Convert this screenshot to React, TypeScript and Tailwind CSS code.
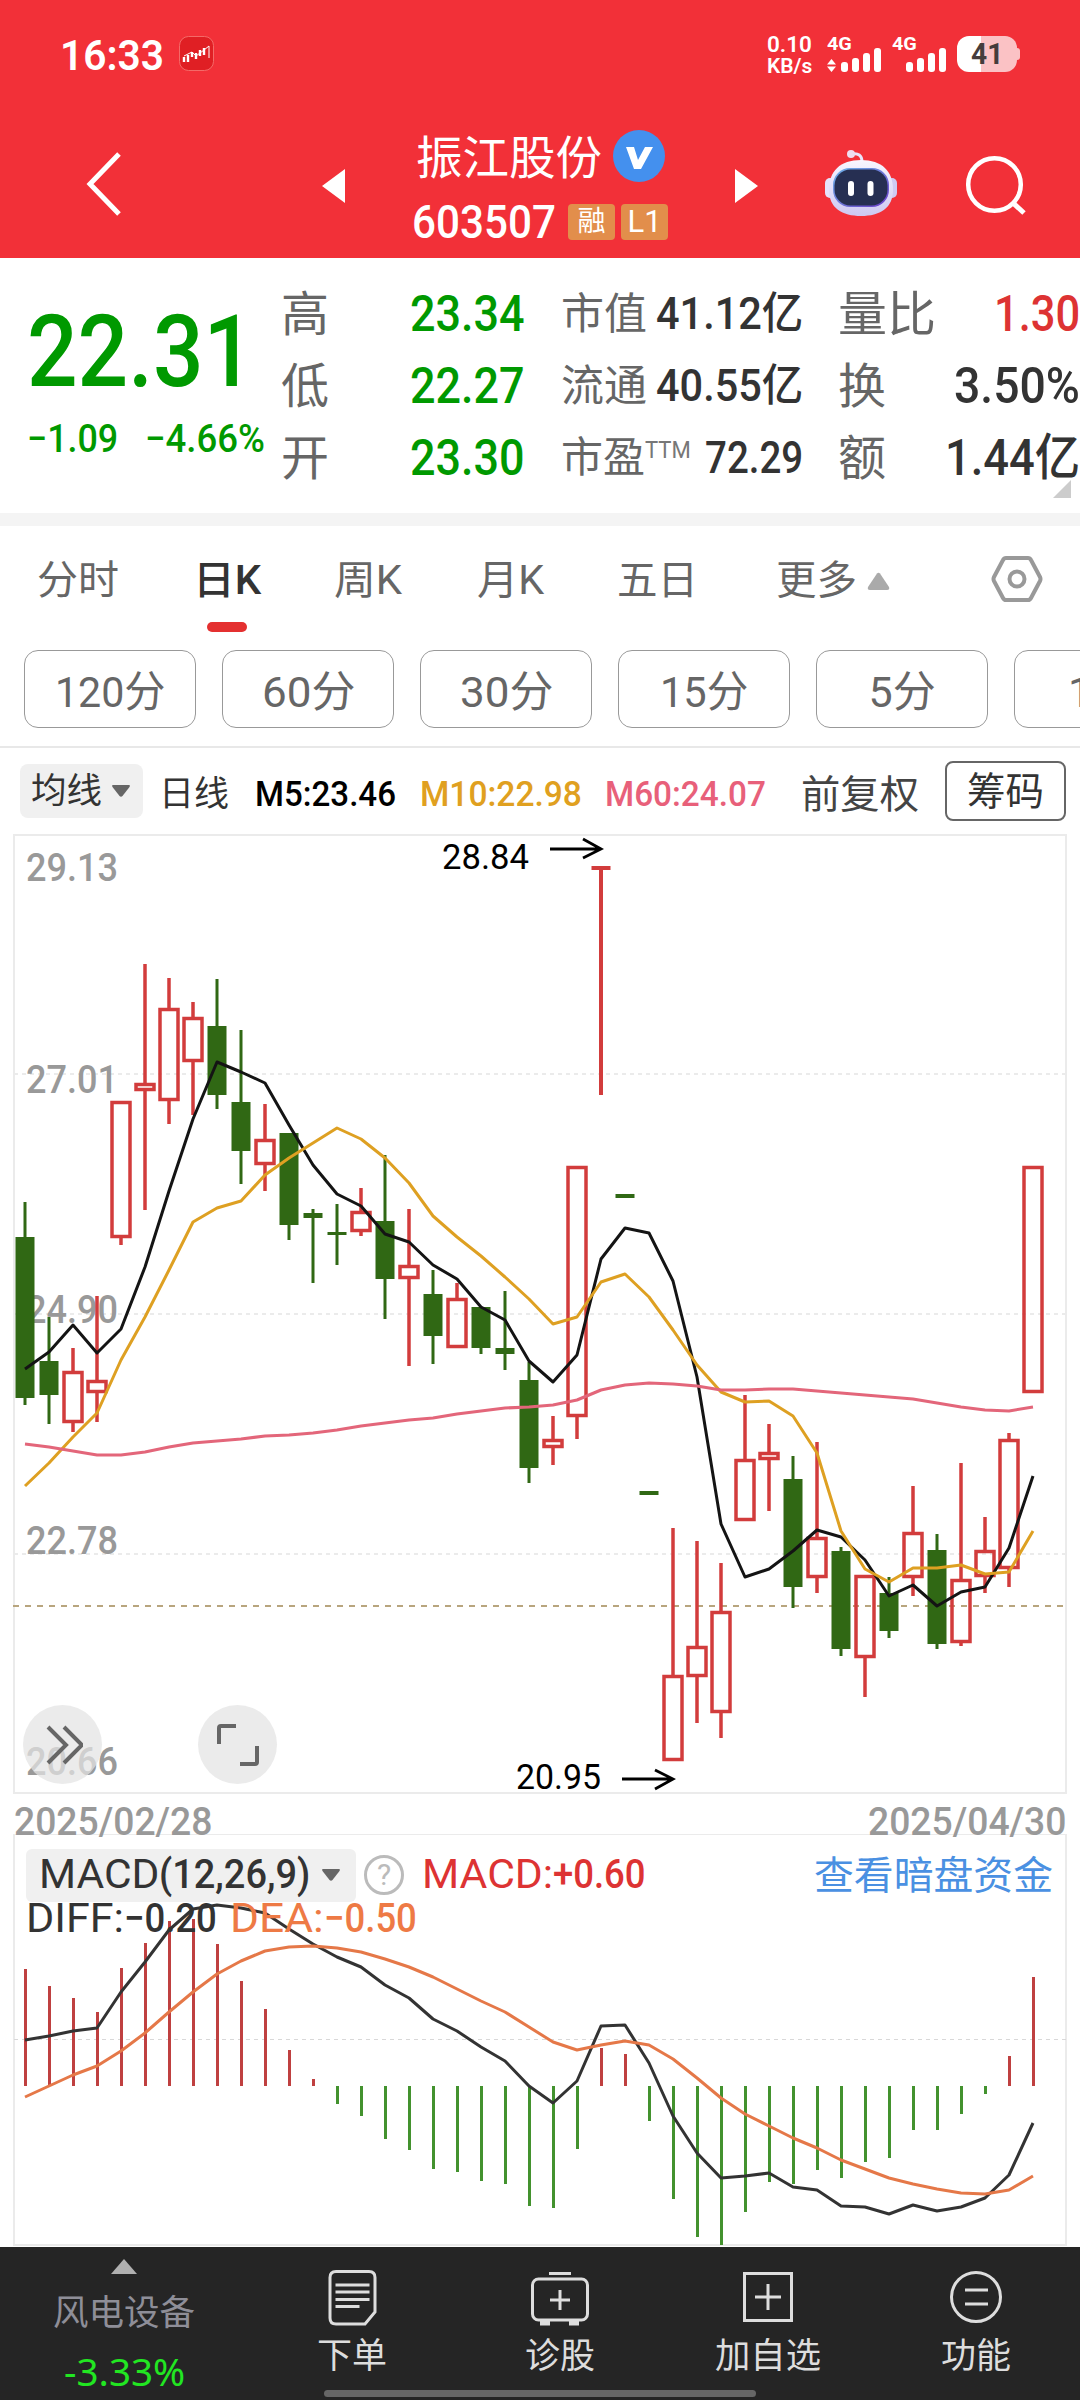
import { useLayoutEffect, useRef, useState } from "react";
import type { ReactNode } from "react";

// [kind, high, bodyTop, bodyBottom, low] in chart pixels, one entry per trading day
type Candle = ["up" | "down", number, number, number, number];

const candles: Candle[] = [
  ["down", 1202, 1237, 1398, 1405],
  ["down", 1317, 1361, 1395, 1424],
  ["up", 1348, 1371, 1423, 1432],
  ["up", 1296, 1380, 1393, 1422],
  ["up", 1101, 1101, 1238, 1245],
  ["up", 964, 1083, 1091, 1210],
  ["up", 978, 1008, 1101, 1124],
  ["up", 1002, 1017, 1062, 1115],
  ["down", 979, 1026, 1095, 1109],
  ["down", 1030, 1102, 1151, 1184],
  ["up", 1104, 1139, 1165, 1191],
  ["down", 1133, 1133, 1225, 1240],
  ["down", 1209, 1213, 1218, 1283],
  ["down", 1204, 1232, 1235, 1265],
  ["up", 1188, 1211, 1232, 1236],
  ["down", 1155, 1221, 1279, 1319],
  ["up", 1209, 1265, 1279, 1366],
  ["down", 1270, 1294, 1336, 1364],
  ["up", 1283, 1298, 1348, 1348],
  ["down", 1307, 1307, 1348, 1354],
  ["down", 1291, 1348, 1354, 1370],
  ["down", 1362, 1380, 1468, 1483],
  ["up", 1416, 1439, 1448, 1465],
  ["up", 1166, 1166, 1417, 1439],
  ["up", 866, 866, 870, 1095],
  ["down", 1194, 1194, 1198, 1198],
  ["down", 1491, 1491, 1495, 1495],
  ["up", 1528, 1675, 1761, 1761],
  ["up", 1541, 1646, 1677, 1723],
  ["up", 1563, 1611, 1713, 1738],
  ["up", 1395, 1459, 1521, 1521],
  ["up", 1424, 1452, 1460, 1511],
  ["down", 1456, 1479, 1587, 1608],
  ["up", 1442, 1537, 1578, 1593],
  ["down", 1547, 1551, 1649, 1656],
  ["up", 1575, 1575, 1658, 1697],
  ["down", 1577, 1593, 1631, 1638],
  ["up", 1486, 1532, 1578, 1596],
  ["down", 1534, 1550, 1644, 1649],
  ["up", 1463, 1579, 1643, 1646],
  ["up", 1517, 1550, 1577, 1593],
  ["up", 1433, 1439, 1569, 1587],
  ["up", 1166, 1166, 1393, 1393],
];

const ma5 = [
  1369, 1352, 1325, 1353, 1329, 1267, 1191, 1119, 1062, 1072, 1083, 1125, 1165, 1194, 1206, 1234,
  1242, 1265, 1279, 1307, 1320, 1361, 1382, 1355, 1259, 1228, 1233, 1281, 1377, 1524, 1577, 1569,
  1551, 1530, 1537, 1560, 1596, 1585, 1606, 1592, 1587, 1548, 1476,
];
const ma10 = [
  1486, 1463, 1437, 1413, 1360, 1317, 1270, 1222, 1208, 1201, 1175, 1158, 1143, 1128, 1139, 1158,
  1183, 1216, 1237, 1256, 1277, 1299, 1324, 1317, 1282, 1274, 1297, 1330, 1365, 1392, 1402, 1401,
  1416, 1453, 1531, 1569, 1582, 1568, 1568, 1565, 1574, 1572, 1531,
];
const ma60 = [
  1444, 1447, 1451, 1455, 1455, 1452, 1447, 1443, 1441, 1439, 1436, 1435, 1433, 1430, 1426, 1423,
  1420, 1418, 1414, 1411, 1408, 1407, 1405, 1400, 1390, 1385, 1383, 1384, 1386, 1390, 1390, 1389,
  1389, 1391, 1393, 1395, 1397, 1399, 1403, 1407, 1410, 1411, 1407,
];
const macdBars = [
  1969, 1986, 1998, 2012, 1968, 1943, 1921, 1919, 1944, 1981, 2009, 2050, 2079, 2104, 2116, 2139,
  2150, 2169, 2172, 2181, 2184, 2206, 2208, 2149, 2048, 2054, 2121, 2199, 2237, 2245, 2212, 2182,
  2184, 2170, 2178, 2162, 2158, 2130, 2130, 2114, 2094, 2056, 1977,
];
const diff = [
  2040, 2036, 2031, 2028, 1992, 1962, 1930, 1909, 1905, 1908, 1913, 1929, 1944, 1957, 1967, 1985,
  1998, 2019, 2031, 2047, 2061, 2086, 2103, 2081, 2026, 2025, 2063, 2116, 2153, 2178, 2176, 2173,
  2187, 2190, 2206, 2207, 2214, 2205, 2211, 2207, 2198, 2175, 2123,
];
const dea = [
  2097, 2086, 2075, 2066, 2051, 2033, 2012, 1992, 1974, 1961, 1951, 1947, 1946, 1948, 1952, 1959,
  1967, 1977, 1989, 2001, 2012, 2027, 2042, 2050, 2045, 2041, 2045, 2059, 2078, 2098, 2114, 2126,
  2138, 2148, 2160, 2169, 2178, 2184, 2189, 2193, 2194, 2190, 2176,
];

const ZERO = 2086;
const xAt = (i: number) => 25 + i * 24;
const toPoints = (ys: number[]) => ys.map((y, i) => `${xAt(i)},${y}`).join(" ");

// Condenses a text so that it takes exactly `w` pixels
const Fit = ({ w, className = "", children }: { w: number; className?: string; children: ReactNode }) => {
  const ref = useRef<HTMLSpanElement>(null);
  const [scale, setScale] = useState(1);

  useLayoutEffect(() => {
    if (ref.current) setScale(w / ref.current.offsetWidth);
  }, [w]);

  return (
    <span className={`inline-block shrink-0 whitespace-nowrap ${className}`} style={{ width: w }}>
      <span ref={ref} className="inline-block origin-left" style={{ transform: `scaleX(${scale})` }}>
        {children}
      </span>
    </span>
  );
};

const Signal = () => (
  <div className="flex h-6 items-end gap-1">
    <i className="h-[10px] w-[7px] rounded-[3px] bg-white" />
    <i className="h-[14px] w-[7px] rounded-[3px] bg-white" />
    <i className="h-[19px] w-[7px] rounded-[3px] bg-white" />
    <i className="h-6 w-[7px] rounded-[3px] bg-white" />
  </div>
);

const StatusBar = () => (
  <div className="flex h-[108px] items-start pl-[60px] pt-9 text-white">
    <Fit w={104} className="text-[43px] font-semibold leading-[39px]">16:33</Fit>
    <svg className="ml-[15px] shrink-0" width="35" height="35" viewBox="0 0 35 35">
      <rect x="0.5" y="0.5" width="34" height="34" rx="9" fill="#e01f24" stroke="#f46a68" />
      <g stroke="#fff" strokeWidth="1.6">
        <path d="M5 21v5M9 19v7M13 16v5M17 17v6M21 14v6M25 12v7" strokeWidth="2.4" />
        <path d="M5 20l8-4 4 4 8-6 5-4v12" fill="none" strokeWidth="1" />
      </g>
    </svg>
    <div className="-mt-px ml-[553px] flex w-[46px] flex-col font-semibold">
      <Fit w={45} className="h-[20px] text-[22px] leading-[20px]">0.10</Fit>
      <Fit w={45} className="h-[20px] text-[20px] leading-[22px]">KB/s</Fit>
    </div>
    <div className="ml-[14px] flex w-[55px] flex-col">
      <Fit w={25} className="h-3 text-[19px] font-bold leading-[15px]">4G</Fit>
      <div className="flex items-end gap-[5px]">
        <svg width="9" height="13" viewBox="0 0 9 13">
          <path d="M0 5.500L4.500 0L9 5.500zM0 7.500L4.500 13L9 7.500z" fill="#fff" />
        </svg>
        <Signal />
      </div>
    </div>
    <div className="ml-[10px] flex w-[56px] flex-col">
      <Fit w={25} className="h-3 text-[19px] font-bold leading-[15px]">4G</Fit>
      <div className="ml-[14px]">
        <Signal />
      </div>
    </div>
    <div className="ml-[9px] flex items-center">
      <div className="flex h-9 w-[60px] items-center justify-center rounded-xl bg-linear-to-r from-white from-40% to-[#fbc2c5] to-40%">
        <Fit w={32} className="text-[29px] font-bold leading-9 text-[#453c3c]">41</Fit>
      </div>
      <i className="h-3 w-[3px] rounded-r bg-[#fbc2c5]" />
    </div>
  </div>
);

const Robot = () => (
  <svg className="shrink-0" width="74" height="70" viewBox="0 0 74 70">
    <defs>
      <linearGradient id="shell" x1="0" y1="0" x2="0" y2="1">
        <stop offset="0" stopColor="#f9f6ff" />
        <stop offset="1" stopColor="#cdc8f2" />
      </linearGradient>
      <linearGradient id="rim" x1="0" y1="0" x2="1" y2="1">
        <stop offset="0" stopColor="#6fb4e8" />
        <stop offset="1" stopColor="#6a3bc8" />
      </linearGradient>
    </defs>
    <path d="M38 14C38 7 34 5 28 6" fill="none" stroke="#e9e4fb" strokeWidth="3" />
    <circle cx="27" cy="6" r="4" fill="#efdcef" />
    <rect x="1" y="30" width="10" height="20" rx="5" fill="#e6e2fa" />
    <rect x="63" y="30" width="10" height="20" rx="5" fill="#cfcaf3" />
    <path d="M37 12C58 12 69 23 69 42C69 60 56 68 37 68S5 60 5 42C5 23 16 12 37 12z" fill="url(#shell)" />
    <rect x="9" y="20" width="56" height="39" rx="17" fill="url(#rim)" />
    <rect x="10.500" y="21.500" width="53" height="36" rx="16" fill="#262f52" />
    <rect x="24" y="33" width="6" height="15" rx="3" fill="#fff" />
    <rect x="43.500" y="33" width="6" height="15" rx="3" fill="#fff" />
  </svg>
);

const TitleBar = () => (
  <div className="flex h-[150px] pl-[82px] text-white">
    <svg className="mt-[42px] shrink-0" width="44" height="68" viewBox="0 0 44 68">
      <path d="M37 4L8 34l29 30" fill="none" stroke="#fff" strokeWidth="5" />
    </svg>
    <svg className="ml-[196px] mt-[61px] shrink-0" width="23" height="34" viewBox="0 0 23 34">
      <path d="M0 17L23 0v34z" fill="#fff" />
    </svg>
    <div className="ml-[67px] w-[259px] shrink-0">
      <div className="flex h-[76px] items-center pl-1 pt-5">
        <Fit w={186} className="pt-[3px] text-[46px] leading-[56px]">振江股份</Fit>
        <svg className="ml-[11px]" width="52" height="52" viewBox="0 0 52 52">
          <circle cx="26" cy="26" r="26" fill="#4490ee" />
          <path d="M13 17h8l4 13 7-13h8L28 39h-7z" fill="#fff" />
        </svg>
      </div>
      <div className="mt-5 flex h-9 items-center">
        <Fit w={144} className="text-[46px] font-medium leading-10">603507</Fit>
        <span className="ml-[12px] flex h-9 w-[47px] items-center justify-center rounded bg-[#e28e4b] text-[28px] leading-9">融</span>
        <span className="ml-[6px] flex h-9 w-[47px] items-center justify-center rounded bg-[#e28e4b] text-[31px] leading-9">L1</span>
      </div>
    </div>
    <svg className="ml-[64px] mt-[61px] shrink-0" width="23" height="34" viewBox="0 0 23 34">
      <path d="M23 17L0 0v34z" fill="#fff" />
    </svg>
    <div className="ml-[66px] mt-[40px]">
      <Robot />
    </div>
    <svg className="ml-[66px] mt-[46px] shrink-0" width="62" height="64" viewBox="0 0 62 64">
      <circle cx="30.500" cy="30.500" r="26.300" fill="none" stroke="#fff" strokeWidth="4.500" />
      <path d="M49 49l11 10" stroke="#fff" strokeWidth="5" />
    </svg>
  </div>
);

const Quote = () => (
  <div className="flex h-[255px] bg-white text-[#333]">
    <div className="flex w-[281px] flex-col pl-[27px] pt-[45px] font-medium text-[#009900]">
      <Fit w={227} className="h-[98px] text-[100px] leading-[98px]">22.31</Fit>
      <div className="mt-[12px] flex text-[39px] leading-[52px]">
        <Fit w={91}>−1.09</Fit>
        <Fit w={120} className="ml-[27px]">−4.66%</Fit>
      </div>
    </div>
    <div className="w-[279px] pt-5">
      {[["高", "23.34"], ["低", "22.27"], ["开", "23.30"]].map(([label, value]) => (
        <div key={label} className="flex h-[72px] leading-[72px]">
          <span className="w-[129px] text-[48px] leading-[74px] text-[#666]">{label}</span>
          <Fit w={115} className="text-[50px] font-medium text-[#009900]">{value}</Fit>
        </div>
      ))}
    </div>
    <div className="w-[278px] pt-5">
      <div className="flex h-[72px] leading-[72px]">
        <span className="w-[96px] pl-px text-[43px] text-[#666]">市值</span>
        <Fit w={147} className="text-[44px] font-medium">41.12亿</Fit>
      </div>
      <div className="flex h-[72px] leading-[72px]">
        <span className="w-[96px] pl-px text-[43px] text-[#666]">流通</span>
        <Fit w={147} className="text-[44px] font-medium">40.55亿</Fit>
      </div>
      <div className="flex h-[72px] leading-[72px]">
        <span className="w-[85px] pl-px text-[42px] text-[#666]">市盈</span>
        <Fit w={46} className="text-[24px] leading-[56px] text-[#777]">TTM</Fit>
        <Fit w={98} className="ml-[14px] text-[44px] font-medium">72.29</Fit>
      </div>
    </div>
    <div className="w-[242px] pt-5">
      <div className="flex h-[72px] justify-between leading-[72px]">
        <Fit w={98} className="text-[48px] leading-[74px] text-[#666]">量比</Fit>
        <Fit w={86} className="text-[50px] font-medium text-[#dd3333]">1.30</Fit>
      </div>
      <div className="flex h-[72px] justify-between leading-[72px]">
        <span className="text-[48px] leading-[74px] text-[#666]">换</span>
        <Fit w={126} className="text-[50px] font-medium">3.50%</Fit>
      </div>
      <div className="relative flex h-[72px] justify-between leading-[72px]">
        <span className="text-[48px] leading-[74px] text-[#666]">额</span>
        <Fit w={135} className="text-[50px] font-medium">1.44亿</Fit>
        <svg className="absolute right-[9px] top-[58px]" width="18" height="18" viewBox="0 0 18 18">
          <path d="M18 0v18H0z" fill="#ccc" />
        </svg>
      </div>
    </div>
  </div>
);

const PeriodTabs = () => (
  <div className="h-[124px] bg-white pt-[25px] text-[40px] text-[#666]">
    <div className="flex h-[60px] items-center pl-[37px] leading-[62px]">
      <Fit w={82}>分时</Fit>
      <div className="relative ml-[74px] flex">
        <Fit w={68} className="font-medium text-[#333]">日K</Fit>
        <i className="absolute left-[14px] top-[72px] h-[10px] w-10 rounded-full bg-[#e43030]" />
      </div>
      <Fit w={68} className="ml-[73px]">周K</Fit>
      <Fit w={67} className="ml-[75px]">月K</Fit>
      <Fit w={81} className="ml-[73px]">五日</Fit>
      <Fit w={81} className="ml-[78px]">更多</Fit>
      <svg className="ml-[10px]" width="23" height="18" viewBox="0 0 23 18">
        <path d="M10 1.500Q11.500 0 13 1.500L22 15Q23 18 20 18H3Q0 18 1 15z" fill="#aaa" />
      </svg>
      <svg className="-mt-1 ml-[101px]" width="52" height="48" viewBox="0 0 52 48">
        <path d="M15 3h22q2 0 3 2l9 17q1 2 0 4l-9 17q-1 2-3 2H15q-2 0-3-2L3 26q-1-2 0-4l9-17q1-2 3-2z" fill="none" stroke="#999" strokeWidth="4" />
        <circle cx="26" cy="24" r="7.500" fill="none" stroke="#999" strokeWidth="4" />
      </svg>
    </div>
  </div>
);

const MinuteChips = () => {
  const chips: [string, number][] = [["120分", 111], ["60分", 93], ["30分", 93], ["15分", 88], ["5分", 67]];

  return (
    <div className="flex h-[98px] gap-[26px] overflow-hidden border-b-2 border-[#e8e8e8] bg-white pl-6 text-[43px] leading-[82px] text-[#666]">
      {chips.map(([label, w]) => (
        <div key={label} className="flex h-[78px] w-[172px] shrink-0 justify-center rounded-[14px] border-[1.5px] border-[#999]">
          <Fit w={w}>{label}</Fit>
        </div>
      ))}
      <div className="h-[78px] w-[172px] shrink-0 rounded-[14px] border-[1.5px] border-[#999] pl-[53px]">1分</div>
    </div>
  );
};

const Averages = () => (
  <div className="flex h-[81px] items-center bg-white pl-5 pt-1 text-[35px] font-medium leading-[54px]">
    <div className="flex h-[54px] w-[123px] shrink-0 items-center rounded-lg bg-[#f0f0f0] pl-[11px] font-normal text-[#333]">
      <Fit w={71} className="pt-[3px]">均线</Fit>
      <svg className="ml-[10px]" width="18" height="12" viewBox="0 0 18 12">
        <path d="M1 0h16q1.500 0 .5 2l-7 9q-1.500 1.500-3 0L.5 2Q-.5 0 1 0z" fill="#666" />
      </svg>
    </div>
    <Fit w={70} className="ml-4 pt-2 font-normal text-[#333]">日线</Fit>
    <Fit w={141} className="ml-[26px] pt-2 text-black">M5:23.46</Fit>
    <Fit w={162} className="ml-[24px] pt-2 text-[#e0a020]">M10:22.98</Fit>
    <Fit w={161} className="ml-[23px] pt-2 text-[#e8607a]">M60:24.07</Fit>
    <Fit w={118} className="ml-[35px] pt-[9px] text-[39px] font-normal text-[#444]">前复权</Fit>
    <div className="ml-[26px] flex h-[60px] w-[121px] items-center justify-center rounded-lg border-2 border-[#666] font-normal text-[#333]">
      <Fit w={77} className="pt-[3px] text-[39px]">筹码</Fit>
    </div>
  </div>
);

const AxisLabel = ({ y, children }: { y: number; children: string }) => (
  <text x="26" y={y} fontSize="39" fontWeight="500" fill="#999" textLength="92" lengthAdjust="spacingAndGlyphs">
    {children}
  </text>
);

const CandleShape = ({ candle, x }: { candle: Candle; x: number }) => {
  const [kind, high, top, bottom, low] = candle;

  if (kind === "down") {
    return (
      <g fill="#306814">
        <rect x={x - 1.5} y={high} width="3" height={low - high} />
        <rect x={x - 9.5} y={top} width="19" height={bottom - top} />
      </g>
    );
  }
  if (bottom - top < 5) {
    return (
      <g fill="#d23c3c">
        <rect x={x - 9.5} y={top} width="19" height={bottom - top} />
        <rect x={x - 2} y={high} width="4" height={low - high} />
      </g>
    );
  }
  return (
    <g fill="none" stroke="#d23c3c" strokeWidth="3.500">
      <path d={`M${x} ${high}V${top}M${x} ${bottom}V${low}`} />
      <rect x={x - 9} y={top + 1.5} width="18" height={bottom - top - 3} />
    </g>
  );
};

const KlineChart = () => (
  <div className="relative h-[967px] bg-white">
    <svg className="block overflow-visible" width="1080" height="967" viewBox="0 829 1080 967">
      <rect x="14" y="835" width="1052" height="958" fill="none" stroke="#ebebeb" strokeWidth="2" />
      <path d="M14 1074H1066M14 1314H1066M14 1554H1066" stroke="#ebebeb" strokeWidth="2" strokeDasharray="4 4" />
      <path d="M13 1606H1066" stroke="#b8a57e" strokeWidth="2" strokeDasharray="6 6" />
      <AxisLabel y={881}>29.13</AxisLabel>
      <AxisLabel y={1093}>27.01</AxisLabel>
      <AxisLabel y={1323}>24.90</AxisLabel>
      <AxisLabel y={1554}>22.78</AxisLabel>
      <AxisLabel y={1775}>20.66</AxisLabel>
      {candles.map((candle, i) => (
        <CandleShape key={i} candle={candle} x={xAt(i)} />
      ))}
      <g fill="none" strokeWidth="3" strokeLinejoin="round">
        <polyline points={toPoints(ma5)} stroke="#141414" />
        <polyline points={toPoints(ma10)} stroke="#dea022" />
        <polyline points={toPoints(ma60)} stroke="#e3667a" />
      </g>
      <g fontSize="35" fill="#000">
        <text x="442" y="869" textLength="87" lengthAdjust="spacingAndGlyphs">28.84</text>
        <text x="516" y="1789" textLength="85" lengthAdjust="spacingAndGlyphs">20.95</text>
      </g>
      <path d="M550 849h51M583 839l18 10-18 9M622 1779h51M655 1770l18 9-18 10" fill="none" stroke="#000" strokeWidth="2.800" />
    </svg>
    <div className="absolute left-[23px] top-[876px] flex gap-24">
      <button className="flex size-[79px] items-center justify-center rounded-full bg-[#e3e3e3]/72">
        <svg width="40" height="40" viewBox="0 0 40 40">
          <path d="M5 2l18 18L5 38M21 2l18 18-18 18" fill="none" stroke="#666" strokeWidth="4" />
        </svg>
      </button>
      <button className="flex size-[79px] items-center justify-center rounded-full bg-[#e3e3e3]/72">
        <svg width="42" height="42" viewBox="0 0 42 42">
          <path d="M2 20V4q0-2 2-2h15M40 22v16q0 2-2 2H23" fill="none" stroke="#666" strokeWidth="4" />
        </svg>
      </button>
    </div>
  </div>
);

const DateRange = () => (
  <div className="relative z-10 flex h-[38px] justify-between px-[14px] text-[38px] font-medium leading-[52px] text-[#999]">
    <Fit w={198}>2025/02/28</Fit>
    <Fit w={198}>2025/04/30</Fit>
  </div>
);

const MacdChart = () => (
  <div className="relative h-[413px] bg-white">
    <svg className="absolute inset-0" width="1080" height="413" viewBox="0 1834 1080 413">
      <rect x="14" y="1834" width="1052" height="411" fill="none" stroke="#ebebeb" strokeWidth="2" />
      <path d="M14 2039.500H1066" stroke="#d8d8d8" strokeDasharray="4 4" />
      {macdBars.map((end, i) => (
        <path key={i} d={`M${xAt(i) + 0.5} ${ZERO}V${end}`} stroke={end < ZERO ? "#bf4040" : "#43922e"} strokeWidth="3" />
      ))}
      <g fill="none" strokeWidth="3" strokeLinejoin="round">
        <polyline points={toPoints(diff)} stroke="#333" />
        <polyline points={toPoints(dea)} stroke="#e57848" />
      </g>
    </svg>
    <div className="relative flex items-center pl-[26px] pt-3 text-[40px] leading-[56px] text-[#333]">
      <div className="flex h-[53px] w-[330px] items-center rounded-md bg-[#f0f0f0] pl-[13px]">
        <Fit w={120}>MACD</Fit>
        <Fit w={151} className="font-medium">(12,26,9)</Fit>
        <svg className="ml-3" width="18" height="12" viewBox="0 0 18 12">
          <path d="M1 0h16q1.500 0 .5 2l-7 9q-1.500 1.500-3 0L.5 2Q-.5 0 1 0z" fill="#666" />
        </svg>
      </div>
      <span className="ml-2 flex size-10 items-center justify-center rounded-full border-[3px] border-[#bbb] text-[30px] leading-8 text-[#bbb]">?</span>
      <div className="ml-[18px] flex text-[#dd3333]">
        <Fit w={131}>MACD:</Fit>
        <Fit w={93} className="font-medium">+0.60</Fit>
      </div>
      <Fit w={239} className="ml-[168px] pt-0.5 text-[39px] text-[#4a90e2]">查看暗盘资金</Fit>
    </div>
    <div className="relative -mt-[12px] flex pl-[26px] text-[40px] leading-[54px]">
      <Fit w={98} className="text-[#333]">DIFF:</Fit>
      <Fit w={93} className="font-medium text-[#333]">−0.20</Fit>
      <Fit w={94} className="ml-[13px] text-[#ee7a45]">DEA:</Fit>
      <Fit w={93} className="font-medium text-[#ee7a45]">−0.50</Fit>
    </div>
  </div>
);

const BottomBar = () => (
  <div className="relative flex h-[153px] bg-[#252525] text-[35px] leading-10 text-[#ddd]">
    <div className="flex w-[248px] shrink-0 flex-col items-center pt-3">
      <svg width="26" height="15" viewBox="0 0 26 15">
        <path d="M13 0l13 15H0z" fill="#b0b0b0" />
      </svg>
      <Fit w={142} className="mt-[20px] text-[#8e8e98]">风电设备</Fit>
      <Fit w={121} className="mt-[17px] font-['Noto_Sans'] text-[38px] text-[#22e622]">-3.33%</Fit>
    </div>
    <div className="flex w-[208px] flex-col items-center pt-[23px]">
      <svg width="49" height="56" viewBox="0 0 49 56" fill="none" stroke="#ddd" strokeWidth="3">
        <path d="M8 1.500h33q6 0 6 6V42L37 54H8q-6 0-6-6V7.500q0-6 6-6z" />
        <path d="M7.500 15h34M7.500 22h34M7.500 29.500h34M7.500 36.500h24" />
      </svg>
      <Fit w={70} className="mt-[11px]">下单</Fit>
    </div>
    <div className="flex w-[208px] flex-col items-center pt-[25px]">
      <svg width="58" height="54" viewBox="0 0 58 54" fill="none" stroke="#ddd" strokeWidth="3">
        <path d="M18 1.500h22" />
        <rect x="1.500" y="7" width="55" height="41" rx="6" />
        <path d="M29 18v20M19 28h20" />
        <path d="M9 51h10M38 51h10" strokeWidth="5" />
      </svg>
      <Fit w={70} className="mt-[11px]">诊股</Fit>
    </div>
    <div className="flex w-[208px] flex-col items-center pt-[25px]">
      <svg width="50" height="50" viewBox="0 0 50 50" fill="none" stroke="#ddd" strokeWidth="3">
        <rect x="1.500" y="1.500" width="47" height="47" />
        <path d="M25 12v26M12 25h26" />
      </svg>
      <Fit w={106} className="mt-[15px]">加自选</Fit>
    </div>
    <div className="flex w-[208px] flex-col items-center pt-[24px]">
      <svg width="52" height="52" viewBox="0 0 52 52" fill="none" stroke="#ddd" strokeWidth="3">
        <circle cx="26" cy="26" r="24.500" />
        <path d="M15 19h23M15 33h23" />
      </svg>
      <Fit w={70} className="mt-[14px]">功能</Fit>
    </div>
    <i className="absolute bottom-[3px] left-[324px] h-[7px] w-[432px] rounded-full bg-[#666]" />
  </div>
);

export default function App() {
  return (
    <main className="flex h-[2400px] w-[1080px] flex-col overflow-hidden bg-white font-['Roboto','Noto_Sans_CJK_SC',sans-serif]">
      <header className="h-[258px] bg-[#f23038]">
        <StatusBar />
        <TitleBar />
      </header>
      <Quote />
      <div className="h-[13px] bg-[#f4f4f4]" />
      <PeriodTabs />
      <MinuteChips />
      <Averages />
      <KlineChart />
      <DateRange />
      <MacdChart />
      <BottomBar />
    </main>
  );
}
